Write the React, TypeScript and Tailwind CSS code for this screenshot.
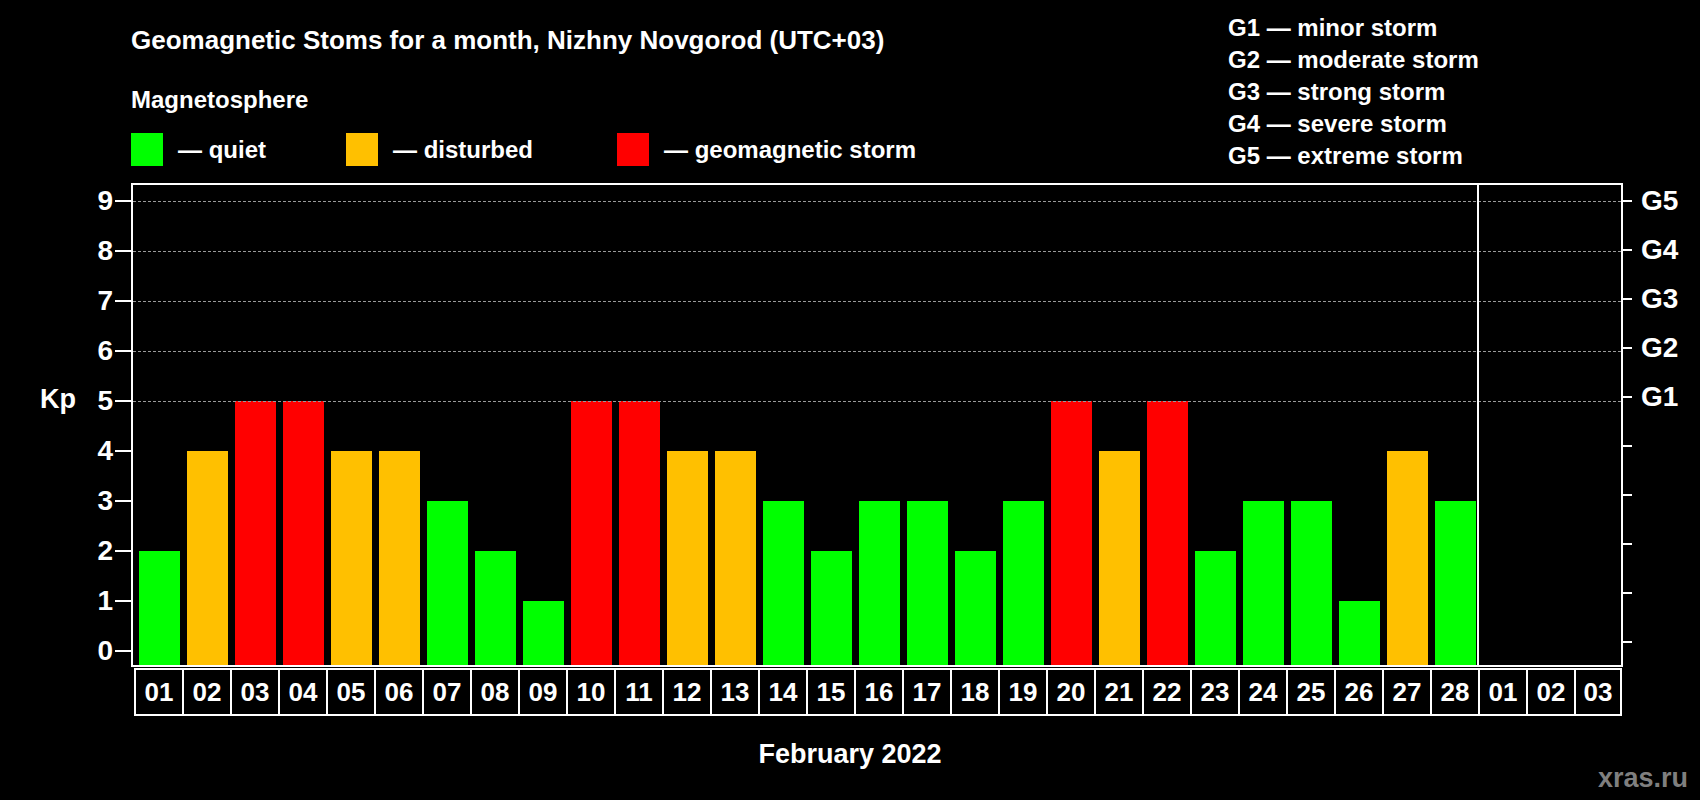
import React from "react";

const data = [2,4,5,5,4,4,3,2,1,5,5,4,4,3,2,3,3,2,3,5,4,5,2,3,3,1,4,3];
const days = [...data.map((_, i) => String(i + 1).padStart(2, "0")), "01", "02", "03"];
const color = (v: number) => (v >= 5 ? "bg-[#ff0000]" : v === 4 ? "bg-[#ffc000]" : "bg-[#00ff00]");
const levels = [9,8,7,6,5,4,3,2,1,0];
const g: Record<number, string> = { 9: "G5", 8: "G4", 7: "G3", 6: "G2", 5: "G1" };

export default function App() {
  return (
    <div className="w-[1700px] h-[800px] bg-black text-white font-bold overflow-hidden" style={{ fontFamily: '"Liberation Sans", Arial, sans-serif' }}>
      {/* header */}
      <div className="flex h-[183px]">
        <div className="pl-[131px] w-[1228px]">
          <div className="mt-[25px] text-[26px] leading-[30px]">Geomagnetic Stoms for a month, Nizhny Novgorod (UTC+03)</div>
          <div className="mt-[30px] text-[24px] leading-[30px]">Magnetosphere</div>
          <div className="mt-[18px] flex items-center h-[33px] text-[24px]">
            <div className="w-[32px] h-[33px] bg-[#00ff00]" />
            <span className="ml-[15px] w-[168px]">— quiet</span>
            <div className="w-[32px] h-[33px] bg-[#ffc000]" />
            <span className="ml-[15px] w-[224px]">— disturbed</span>
            <div className="w-[32px] h-[33px] bg-[#ff0000]" />
            <span className="ml-[15px]">— geomagnetic storm</span>
          </div>
        </div>
        <div className="pt-[12px] text-[24px] leading-[32px]">
          <div>G1 — minor storm</div>
          <div>G2 — moderate storm</div>
          <div>G3 — strong storm</div>
          <div>G4 — severe storm</div>
          <div>G5 — extreme storm</div>
        </div>
      </div>

      {/* chart row */}
      <div className="flex h-[484px]">
        <div className="w-[131px] relative">
          <div className="absolute left-[40px] top-[201px] text-[27px] leading-[30px]">Kp</div>
          <div className="flex flex-col mt-[-7px]">
            {levels.map((l) => (
              <div key={l} className="h-[50px] flex items-center justify-end">
                <span className="text-[28px] leading-none">{l}</span>
                <div className="w-[16px] h-[2px] bg-white ml-[2px]" />
              </div>
            ))}
          </div>
        </div>
        <div className="w-[1492px] h-[484px] border-2 border-white relative">
          <div className="absolute left-0 right-0 top-0 flex flex-col mt-[16px]">
            {[9,8,7,6,5].map((l) => (
              <div key={l} className="h-[50px] border-t border-dashed border-[#9a9a9a]" />
            ))}
          </div>
          <div className="absolute top-0 bottom-0 left-[1344px] w-[2px] bg-white" />
          <div className="flex items-end h-full pl-[1px]">
            {data.map((v, i) => (
              <div key={i} className="w-[48px] flex">
                <div className={`ml-[5px] w-[41px] ${color(v)}`} style={{ height: v * 50 + 14 }} />
              </div>
            ))}
          </div>
        </div>
        <div className="flex flex-col mt-[-7px]">
          {levels.map((l) => (
            <div key={l} className="h-[50px] flex items-center">
              <div className="w-[9px] h-[2px] bg-white" />
              <span className="ml-[9px] text-[28px] leading-none">{g[l] ?? ""}</span>
            </div>
          ))}
        </div>
      </div>

      {/* dates */}
      <div className="flex ml-[134px] mt-[1px]">
        {days.map((d, i) => (
          <div key={i} className={`w-[48px] h-[48px] border-y-2 border-l-2 border-white flex items-center justify-center text-[26px] ${i === days.length - 1 ? "border-r-2" : ""}`}>
            {d}
          </div>
        ))}
      </div>

      <div className="flex mt-[22px] relative">
        <div className="w-[1756px] text-center text-[27px] leading-[32px]">February 2022</div>
      </div>
      <div className="flex justify-end pr-[12px] mt-[-8px] text-[27px] leading-[32px] text-[#7f7f7f]">xras.ru</div>
    </div>
  );
}
